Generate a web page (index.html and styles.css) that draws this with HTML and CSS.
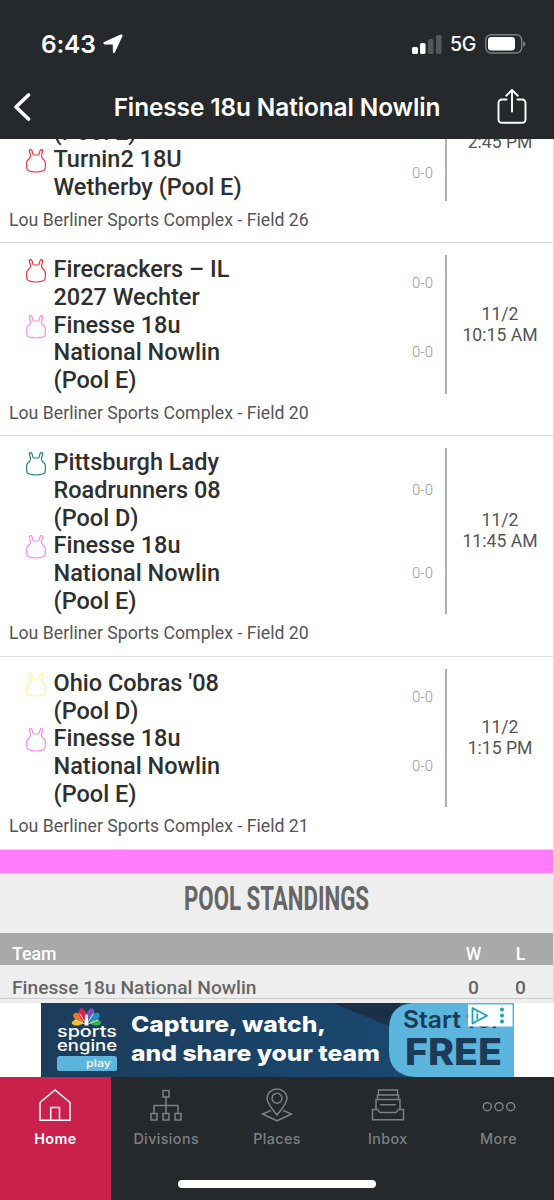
FILE: index.html
```html
<!DOCTYPE html>
<html lang="en">
<head>
    <meta charset="UTF-8">
    <meta name="viewport" content="width=device-width, initial-scale=1.0">
    <title>Finesse 18u National Nowlin</title>
    <link rel="stylesheet" href="styles.css">
</head>
<body>
    <!-- shared jersey icon -->
    <svg class="defs" width="0" height="0">
        <symbol id="jersey" viewBox="0 0 20 24">
            <path d="M3.2 1.4 Q4.8 -.1 5.9 1.6 L7 5.2 Q7.4 6 8.2 6 H11.8 Q12.6 6 13 5.2 L14.1 1.6 Q15.2 -.1 16.8 1.4 L15.6 6.2 Q15.2 8.4 16.3 9.3 L18.3 11.2 Q19.3 12 19.3 13.4 V18.8 Q19.3 21 17.4 21.8 Q14.5 23 10 23 Q5.5 23 2.6 21.8 Q.7 21 .7 18.8 V13.4 Q.7 12 1.7 11.2 L3.7 9.3 Q4.8 8.4 4.4 6.2Z"/>
        </symbol>
    </svg>

    <header class="top">
        <div class="status">
            <span class="clock">6:43</span>
            <svg class="location-arrow" width="20" height="20" viewBox="0 0 20 20"><path d="M1.2 8 L17.6 .6 Q20 -.1 19.4 2.2 L12 18.2 Q10.4 20.4 9.8 17.8 V10.4 H2 Q-1 9.5 1.2 8Z"/></svg>
            <svg class="signal" width="30" height="19" viewBox="0 0 30 19">
                <rect x="0" y="12" width="6" height="7" rx="1.6"/>
                <rect x="8" y="8" width="5.5" height="11" rx="1.6"/>
                <rect class="off" x="16" y="4" width="5.5" height="15" rx="1.6"/>
                <rect class="off" x="24" y="0" width="5.5" height="19" rx="1.6"/>
            </svg>
            <span class="network">5G</span>
            <svg class="battery" width="41" height="20" viewBox="0 0 41 20">
                <rect class="shell" x=".7" y=".7" width="36" height="18.3" rx="5.5"/>
                <rect x="3" y="3" width="27" height="13.6" rx="3.3"/>
                <path class="cap" d="M38.2 7 Q40.5 8 40.5 10 T38.2 13Z"/>
            </svg>
        </div>
        <div class="titlebar">
            <svg class="back" width="18" height="30" viewBox="0 0 18 30"><path d="M15.5 3 L3 15 L15.5 27"/></svg>
            <h1>Finesse 18u National Nowlin</h1>
            <svg class="share" width="30" height="37" viewBox="0 0 30 37"><path d="M9.5 11.5 H5 Q1.5 11.5 1.5 15 V31.2 Q1.5 34.7 5 34.7 H25 Q28.5 34.7 28.5 31.2 V15 Q28.5 11.5 25 11.5 H20.5 M15 23.5 V2 M9.2 7.7 L15 2 L20.8 7.7"/></svg>
        </div>
    </header>

    <main>
        <div class="game">
            <div class="matchup">
                <div class="teams">
                    <div class="team"><svg class="jersey pink"><use href="#jersey"/></svg><span class="name">Finesse 18u National Nowlin (Pool E)</span><span class="score">0-0</span></div>
                    <div class="team"><svg class="jersey red"><use href="#jersey"/></svg><span class="name">Turnin2 18U Wetherby (Pool E)</span><span class="score">0-0</span></div>
                </div>
                <div class="time">11/2<br>2:45 PM</div>
            </div>
            <div class="place">Lou Berliner Sports Complex - Field 26</div>
        </div>
        <div class="game">
            <div class="matchup">
                <div class="teams">
                    <div class="team"><svg class="jersey red"><use href="#jersey"/></svg><span class="name">Firecrackers – IL 2027 Wechter</span><span class="score">0-0</span></div>
                    <div class="team"><svg class="jersey pink"><use href="#jersey"/></svg><span class="name">Finesse 18u National Nowlin (Pool E)</span><span class="score">0-0</span></div>
                </div>
                <div class="time">11/2<br>10:15 AM</div>
            </div>
            <div class="place">Lou Berliner Sports Complex - Field 20</div>
        </div>
        <div class="game">
            <div class="matchup">
                <div class="teams">
                    <div class="team"><svg class="jersey teal"><use href="#jersey"/></svg><span class="name">Pittsburgh Lady Roadrunners 08 (Pool D)</span><span class="score">0-0</span></div>
                    <div class="team"><svg class="jersey pink"><use href="#jersey"/></svg><span class="name">Finesse 18u National Nowlin (Pool E)</span><span class="score">0-0</span></div>
                </div>
                <div class="time">11/2<br>11:45 AM</div>
            </div>
            <div class="place">Lou Berliner Sports Complex - Field 20</div>
        </div>
        <div class="game">
            <div class="matchup">
                <div class="teams">
                    <div class="team"><svg class="jersey yellow"><use href="#jersey"/></svg><span class="name">Ohio Cobras '08 (Pool&nbsp;D)</span><span class="score">0-0</span></div>
                    <div class="team"><svg class="jersey pink"><use href="#jersey"/></svg><span class="name">Finesse 18u National Nowlin (Pool E)</span><span class="score">0-0</span></div>
                </div>
                <div class="time">11/2<br>1:15 PM</div>
            </div>
            <div class="place">Lou Berliner Sports Complex - Field 21</div>
        </div>

        <div class="divider"></div>
        <section class="standings">
            <svg class="heading" width="186" height="60" viewBox="0 0 186 60"><text x="0" y="37" textLength="185" lengthAdjust="spacingAndGlyphs">POOL STANDINGS</text></svg>
            <div class="row head"><span>Team</span><span>W</span><span>L</span></div>
            <div class="row"><span>Finesse 18u National Nowlin</span><span>0</span><span>0</span></div>
        </section>
    </main>

    <aside class="ad">
        <svg width="473" height="74" viewBox="0 0 473 74">
            <defs>
                <linearGradient id="sea"><stop offset="0" stop-color="#1c3c5b"/><stop offset="1" stop-color="#194b76"/></linearGradient>
            </defs>
            <rect width="473" height="74" fill="url(#sea)"/>
            <path d="M292 0 L350 24 L360 0Z" fill="#1b3048"/>
            <path d="M473 0 H372 Q348 2 348 26 V48 Q348 72 374 74 H473Z" fill="#5bb5dc"/>
            <!-- peacock -->
            <g transform="translate(45.5 20.5)">
                <ellipse cx="-9" cy="-1" rx="5.8" ry="3" transform="rotate(-5 -9 -1)" fill="#f5b921"/>
                <ellipse cx="-8" cy="-6" rx="6" ry="3.6" transform="rotate(38 -8 -6)" fill="#ef7826"/>
                <ellipse cx="-3.7" cy="-9" rx="6.5" ry="3.7" transform="rotate(68 -3.7 -9)" fill="#d9264b"/>
                <ellipse cx="3.7" cy="-9" rx="6.5" ry="3.7" transform="rotate(-68 3.7 -9)" fill="#7657b0"/>
                <ellipse cx="8" cy="-6" rx="6" ry="3.6" transform="rotate(-38 8 -6)" fill="#258bd0"/>
                <ellipse cx="9" cy="-1" rx="5.8" ry="3" transform="rotate(5 9 -1)" fill="#36ad54"/>
                <path d="M0 1 L-12 -3.5 M0 1 L-7 -10 M0 1 L7 -10 M0 1 L12 -3.5" stroke="#fff" stroke-width=".8"/>
                <path d="M-1 -9 L1 -9 L2 2 H-2Z" fill="#fff"/>
            </g>
            <g class="brand">
                <text x="16" y="34" textLength="60" lengthAdjust="spacingAndGlyphs">sports</text>
                <text x="16" y="48" textLength="60" lengthAdjust="spacingAndGlyphs">engine</text>
                <rect x="16" y="53" width="60" height="15" rx="2.5" fill="#5bb5dc"/>
                <text class="play" x="45" y="64" textLength="25" lengthAdjust="spacingAndGlyphs">play</text>
            </g>
            <text class="pitch" x="90" y="29" textLength="195" lengthAdjust="spacingAndGlyphs">Capture, watch,</text>
            <text class="pitch" x="90" y="57.5" textLength="249" lengthAdjust="spacingAndGlyphs">and share your team</text>
            <text class="start" x="362" y="24.5" textLength="98" lengthAdjust="spacingAndGlyphs">Start for</text>
            <text class="free" x="364" y="62" textLength="97" lengthAdjust="spacingAndGlyphs">FREE</text>
            <g class="choices">
                <rect x="427" y="1.5" width="44.5" height="22" fill="#fff"/>
                <path d="M431.5 5 V20.5 L446 12.7Z M436.3 10.5 V16.5"/>
                <circle cx="436.3" cy="8.7" r=".9"/>
                <circle cx="461" cy="6.5" r="2"/><circle cx="461" cy="12.5" r="2"/><circle cx="461" cy="18.5" r="2"/>
            </g>
        </svg>
    </aside>

    <nav>
        <a class="tab active">
            <svg width="34" height="34" viewBox="0 0 34 34"><path d="M2 14.5 L17 2 L32 14.5 V32.3 H2Z M12.7 32.3 V19.5 H21.5 V32.3"/></svg>
            <span>Home</span>
        </a>
        <a class="tab">
            <svg width="34" height="34" viewBox="0 0 34 34"><path d="M14 2.5 H20 V9 H14Z M17 9 V25 M5 25 V17.5 H29 V25 M2 25.5 H8 V32 H2Z M14 25.5 H20 V32 H14Z M26 25.5 H32 V32 H26Z"/></svg>
            <span>Divisions</span>
        </a>
        <a class="tab">
            <svg width="34" height="34" viewBox="0 0 34 34"><path d="M17 27 Q7 15 7 10.5 A10 9.5 0 0 1 27 10.5 Q27 15 17 27Z M11 22.5 L2.5 26 L17 32.8 L31.5 26 L23 22.5"/><circle cx="17" cy="10.2" r="5"/></svg>
            <span>Places</span>
        </a>
        <a class="tab">
            <svg width="34" height="34" viewBox="0 0 34 34"><path d="M7.5 7 V2 H26.5 V7 M6.5 11.5 V7 H27.5 V11.5 M5 21.5 V11.5 H29 V21.5 M9 16.8 H25 M1.5 21.5 H6.5 L9 24.5 H25 L27.5 21.5 H32.5 V31.7 H1.5Z"/></svg>
            <span>Inbox</span>
        </a>
        <a class="tab">
            <svg width="34" height="34" viewBox="0 0 34 34"><circle cx="5.3" cy="18.7" r="4"/><circle cx="17" cy="18.7" r="4"/><circle cx="28.7" cy="18.7" r="4"/></svg>
            <span>More</span>
        </a>
        <div class="home-bar"></div>
    </nav>
</body>
</html>
```
FILE: styles.css
```css
* { box-sizing: border-box; }
body { margin: 0; width: 554px; height: 1200px; display: flex; flex-direction: column; overflow: hidden; background: #fff; font-family: Roboto, sans-serif; color: #555; }
svg { display: block; flex: none; }
.defs { position: absolute; }

/* header */
.top { flex: none; height: 139px; background: #25292c; color: #fff; font-family: Inter, sans-serif; }
.status { display: flex; align-items: center; height: 74px; padding: 14px 28px 0 41px; }
.status svg { fill: #fff; }
.clock { width: 56px; font-size: 24.5px; font-weight: 600; letter-spacing: -0.2px; }
.location-arrow { margin-left: 6px; }
.signal { margin-left: auto; }
.signal .off { fill: #55585a; }
.network { width: 27px; margin: 0 8px; font-size: 19.5px; font-weight: 500; letter-spacing: -0.3px; }
.battery .shell { fill: none; stroke: #7c7f81; stroke-width: 1.4; }
.battery .cap { fill: #7c7f81; }
.titlebar { display: grid; grid-template-columns: 30px 1fr 30px; align-items: center; height: 65px; padding: 0 27px 0 13px; }
.titlebar svg { fill: none; stroke: #fff; stroke-linecap: round; stroke-linejoin: round; }
.back { stroke-width: 3.6; }
.share { stroke-width: 1.9; }
h1 { margin: 0; padding-left: 14px; font-size: 24.4px; font-weight: 600; line-height: 30px; letter-spacing: -0.1px; text-align: center; white-space: nowrap; }

/* games */
main { flex: none; height: 864px; display: flex; flex-direction: column; justify-content: flex-end; overflow: hidden; border-right: 1px solid #ddd; }
.game { flex: none; border-bottom: 1px solid #dcdcdc; padding-top: 12px; }
.matchup { display: flex; }
.teams { width: 447px; border-right: 2px solid #b0b0b0; }
.team { display: flex; align-items: center; padding: 0 12px 0 26px; }
.jersey { width: 20px; height: 24px; margin: 4px 7.5px 0 0; align-self: flex-start; fill: none; stroke-width: 1.2; }
.red { stroke: #ee3338; }
.pink { stroke: #f58bf5; }
.teal { stroke: #228080; }
.yellow { stroke: #f8f89a; }
.name { width: 200px; padding-top: 1px; margin-bottom: -1px; font-size: 23.5px; font-weight: 500; line-height: 27.65px; color: #2f2f2f; }
.score { margin-left: auto; font-size: 15px; font-weight: 300; color: #999; }
.time { flex: 1; align-self: center; text-align: center; font-size: 17.6px; line-height: 21px; }
.place { height: 41.7px; padding-left: 9px; line-height: 39px; font-size: 17.7px; }

/* standings */
.divider { flex: none; height: 23px; background: #ff7bff; }
.standings { flex: none; height: 130px; background: #eee; }
.heading { margin: 0 auto; }
.heading text { font: bold 34px Roboto, sans-serif; fill: #666; }
.row { display: grid; grid-template-columns: 1fr 47px 47px; height: 34px; padding: 7px 9px 0 12px; line-height: 31px; font-size: 19.2px; font-weight: 500; color: #666; border-bottom: 1px solid #ccc; }
.row span + span { text-align: center; }
.row.head { height: 32px; padding-top: 6px; background: #a9a9a9; color: #fff; border: 0; font-size: 17.7px; }

/* ad */
.ad { flex: none; height: 74px; padding-left: 41px; }
.brand text { font: 500 16px Inter, sans-serif; fill: #fff; }
.brand .play { font-size: 10.5px; }
.pitch { font: 800 22px Inter, sans-serif; fill: #fff; }
.start { font: 600 24px Inter, sans-serif; fill: #1b3b58; }
.free { font: 800 37px Inter, sans-serif; fill: #1b3b58; }
.choices path { fill: none; stroke: #18a5bc; stroke-width: 1.8; stroke-linejoin: round; }
.choices circle { fill: #18a5bc; }

/* tabs */
nav { position: relative; flex: none; display: flex; height: 123px; background: #25292c; }
.tab { flex: 1; display: flex; flex-direction: column; align-items: center; padding-top: 11px; font: 500 14.3px/20px Inter, sans-serif; letter-spacing: 0.4px; color: #7d8082; }
.tab svg { fill: none; stroke: currentColor; stroke-width: 1.5; }
.tab span { margin-top: 7px; }
.active { background: #c9214c; color: #fff; font-weight: 600; }
.home-bar { position: absolute; left: 178px; top: 103px; width: 198px; height: 8px; border-radius: 4px; background: #fff; }
```
